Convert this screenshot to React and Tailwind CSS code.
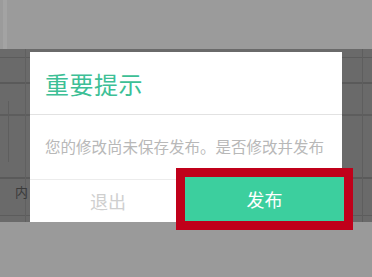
import React from "react";

export default function App() {
  const font = { fontFamily: '"Noto Sans CJK SC", "Noto Sans", sans-serif' };
  return (
    <div className="relative w-[372px] h-[277px] overflow-hidden flex flex-col bg-[#9a9a9a]" style={font}>
      {/* top band */}
      <div className="h-[49px] shrink-0 bg-[#9b9b9b] flex">
        <div className="ml-[3px] w-[4px] h-full bg-[#a3a3a3]" />
      </div>
      {/* dimmed table area */}
      <div className="relative h-[173px] shrink-0 bg-[#6a6a6a] flex">
        {/* faint table lines behind the modal */}
        <div className="absolute left-0 right-0 top-[8px] h-[1px] bg-[#5c5c5c]" />
        <div className="absolute left-0 right-0 top-[33px] h-[2px] bg-[#5a5a5a]" />
        <div className="absolute left-0 right-0 top-[65px] h-[2px] bg-[#5d5d5d]" />
        <div className="absolute left-0 right-0 top-[128px] h-[2px] bg-[#5a5a5a]" />
        <div className="absolute left-0 right-0 top-[166px] h-[1px] bg-[#5c5c5c]" />
        <div className="absolute left-[8px] top-[52px] bottom-[60px] w-[1px] bg-[#5e5e5e]" />
        <div className="absolute left-[25px] top-0 bottom-0 w-[1px] bg-[#606060]" />
        <div className="absolute right-[9px] top-0 bottom-0 w-[1px] bg-[#5e5e5e]" />
        <div className="absolute left-[15px] top-[136px] text-[13px] leading-none text-[#3a3a3a]">内</div>

        {/* dialog */}
        <div className="relative ml-[30px] mt-[3px] w-[312px] h-[170px] bg-white flex flex-col">
          <div className="h-[62px] flex items-center pl-[15px] pt-[2px]">
            <span className="text-[24px] leading-none text-[#3dbf96] tracking-[0.5px]">重要提示</span>
          </div>
          <div className="h-[1px] bg-[#e2e2e2]" />
          <div className="h-[64px] flex items-center pl-[15px]">
            <span className="text-[15.5px] leading-none text-[#b8b8b8] whitespace-nowrap">您的修改尚未保存发布。是否修改并发布</span>
          </div>
          <div className="h-[1px] bg-[#ececec]" />
          <div className="flex-1 flex">
            <div className="w-[156px] flex items-center justify-center">
              <span className="text-[18px] leading-none text-[#cfcfcf]">退出</span>
            </div>
          </div>
        </div>
      </div>
      <div className="flex-1 bg-[#9a9a9a]" />

      {/* highlighted publish button */}
      <div className="absolute left-[176px] top-[168px] w-[177px] h-[62px] border-[9px] border-[#c0001a] bg-[#3ccf9e] flex items-center justify-center">
        <span className="text-[18px] leading-none text-white">发布</span>
      </div>
    </div>
  );
}
